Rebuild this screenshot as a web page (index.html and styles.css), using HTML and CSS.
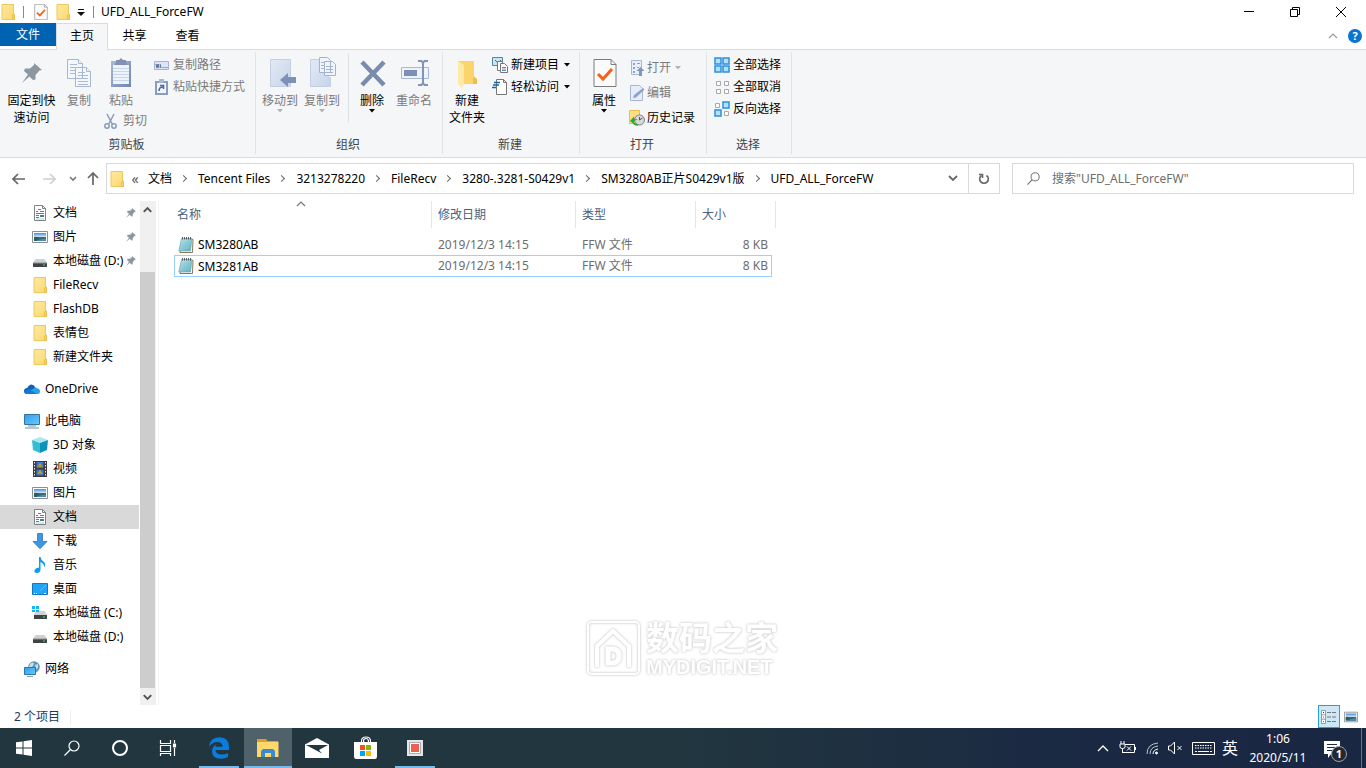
FILE: index.html
```html
<!DOCTYPE html>
<html lang="zh-CN">
<head>
<meta charset="utf-8">
<title>UFD_ALL_ForceFW</title>
<link rel="stylesheet" href="styles.css">
</head>
<body>
<svg class="defs" aria-hidden="true">
  <defs>
    <linearGradient id="gFolder" x1="0" y1="0" x2="1" y2="1"><stop offset="0" stop-color="#ffe9a0"/><stop offset="1" stop-color="#fbd76f"/></linearGradient>
    <linearGradient id="gSky" x1="0" y1="0" x2="0" y2="1"><stop offset="0" stop-color="#3f8fe0"/><stop offset=".5" stop-color="#d8ecf8"/><stop offset=".55" stop-color="#3c6e76"/><stop offset="1" stop-color="#2b5a8c"/></linearGradient>
    <linearGradient id="gScreen" x1="0" y1="0" x2="1" y2="1"><stop offset="0" stop-color="#2e9ff0"/><stop offset="1" stop-color="#6cc8fb"/></linearGradient>
    <linearGradient id="gNote" x1="0" y1="0" x2="1" y2="1"><stop offset="0" stop-color="#c6e9ef"/><stop offset="1" stop-color="#57aebb"/></linearGradient>
    <linearGradient id="gPale" x1="0" y1="0" x2="1" y2="1"><stop offset="0" stop-color="#e3eaf6"/><stop offset="1" stop-color="#c6d4e9"/></linearGradient>
    <linearGradient id="gClip" x1="0" y1="0" x2="1" y2="1"><stop offset="0" stop-color="#a9b8d5"/><stop offset="1" stop-color="#7186b0"/></linearGradient>
  </defs>
  <symbol id="folder" viewBox="0 0 16 16"><path d="M2 .5h11.500V11l1 1v3.500H2z" fill="url(#gFolder)" stroke="#ecc95d"/><path d="M12.500 15.500V11l2-1v5.500z" fill="#f8d468" stroke="#e3b93f" stroke-width=".7"/></symbol>
  <symbol id="doc" viewBox="0 0 16 16"><path d="M2.500.500h8l3 3v12h-11z" fill="#fff" stroke="#7d8286"/><path d="M10.500.500v3h3" fill="none" stroke="#7d8286"/><path d="M4 6.500h2M6 4.500h3M8 6.500h4M4 8.500h8M4 10.500h3M4 12.500h3" stroke="#1c8fdc"/><path d="M8 10h4v2H8z" fill="#3a7fa0"/><path d="M4 14h8" stroke="#9aa" stroke-width=".6"/></symbol>
  <symbol id="picture" viewBox="0 0 16 16"><path d="M.5 2.500h15v11H.500z" fill="#fff" stroke="#8b8f93"/><path d="M2 4h12v8H2z" fill="url(#gSky)"/><path d="M2 8q4-1 6 2l6 1v1H2z" fill="#2e5f5d"/><path d="M7 10.500l7-1V12H4z" fill="#4c89bd"/></symbol>
  <symbol id="drive" viewBox="0 0 16 16"><path d="M3.500 6h9L15 10H1z" fill="#cfd1d3"/><path d="M1 10h14v4H1z" fill="#3f4346"/><path d="M1 10h14" stroke="#8b8f92"/><path d="M11 11.500h2v1h-2z" fill="#35e26a"/></symbol>
  <symbol id="drivec" viewBox="0 0 16 16"><path d="M4.500 6h8L15 10H1.500z" fill="#cfd1d3"/><path d="M2 10h13v4H2z" fill="#3f4346"/><path d="M11 11.500h2v1h-2z" fill="#35e26a"/><path d="M0 1h3v3H0zM4 1h3v3H4zM0 5h3v2H0zM4 5h3v2H4z" fill="#15b5f5"/></symbol>
  <symbol id="cloud" viewBox="0 0 16 16"><path d="M3.500 13Q0 12.800 0 10q0-2.600 3.200-3Q4.300 4 7 3.500q2.700-.2 4.500 3.200l-8 6z" fill="#0d62b9"/><path d="M3.500 13q1-4 5-4.700Q11 5.500 13 7.200q3 .3 3 3.300T13.200 13z" fill="#28a0ea"/><path d="M5 8l8 5H3.500q-3.200 0-3.300-2.500z" fill="#1479d2"/></symbol>
  <symbol id="pc" viewBox="0 0 16 16"><path d="M.5 1.500h15v10H.500z" fill="url(#gScreen)" stroke="#31759f"/><path d="M4 13h8M1 15h14" stroke="#7590a2"/></symbol>
  <symbol id="cube" viewBox="0 0 16 16"><path d="M0 3l8-3 8 3-8 3z" fill="#a8e9f1"/><path d="M0 3l8 3v10l-7-3z" fill="#35bdd2"/><path d="M16 3L8 6v10l7-3z" fill="#0c93bd"/></symbol>
  <symbol id="film" viewBox="0 0 16 16"><path d="M1 0h14v16H1z" fill="#3b3b40"/><path d="M2.500 1v14M13.500 1v14" stroke="#e8e8e8" stroke-dasharray="1.500 1.500"/><path d="M4.500 1h7v6h-7zM4.500 8.500h7v6h-7z" fill="#3b78d4"/><path d="M5 6l3-4 3 4zM5 13l3-4 3 4z" fill="#d59a2c"/><path d="M5 5h6M5 13h5" stroke="#4a9a40"/></symbol>
  <symbol id="down" viewBox="0 0 16 16"><path d="M5.500.500h5v8h4.500L8 15.700 1 8.500h4.500z" fill="#3d96e2" stroke="#2a78bd" stroke-width=".8"/></symbol>
  <symbol id="music" viewBox="0 0 16 16"><path d="M7 0h1.500q.5 3 3 4.500 3 2.500.5 6 .5-4-3.500-5.500v8q-.5 3-3.500 3T2.500 13.500t4.500-3z" fill="#0c9cf0"/></symbol>
  <symbol id="desk" viewBox="0 0 16 16"><path d="M.5 2.500h15v11H.500z" fill="#1ea5fa" stroke="#1279bd"/><path d="M2 12.500h1M4 12.500h1M12 12.500h2" stroke="#fff"/><path d="M8 10l6-6" stroke="#54beff"/></symbol>
  <symbol id="net" viewBox="0 0 16 16"><circle cx="10" cy="6" r="5.800" fill="#5f99ba"/><path d="M6 3q3-3 4 0l-2 3H5zM11 4l3-1v4l-2 1z" fill="#c3dfeb"/><path d="M.5 6.500h11v7H.500z" fill="url(#gScreen)" stroke="#2779ad"/><path d="M3 15.500h6" stroke="#8ba5b3"/></symbol>
  <symbol id="pin" viewBox="0 0 20 20"><path d="M12 0l8 7-2.500.5-4 4.500v4.500l-2.500.5-3.500-3.500L0 20l6-8.500L2 8l1-2.500h5l4-3.500z" fill="#8c98a1"/></symbol>
  <symbol id="notepad" viewBox="0 0 16 16"><path d="M4 2.500h11l-.5 13H2z" fill="#fff" stroke="#8a745a"/><path d="M3.500 1.500h10.500l-1.500 12.500H.800z" fill="url(#gNote)" stroke="#6fa9b5" stroke-width=".7"/><path d="M4 5h8.500M3.700 7h8.500M3.400 9h8.500M3.100 11h8.500" stroke="#86c8d3" stroke-width=".6"/><path d="M4.500 0v2.500M6.500 0v2.500M8.500 0v2.500M10.500 0v2.500M12.500 0v2.500" stroke="#46515a" stroke-width=".9"/></symbol>
  <symbol id="check" viewBox="0 0 24 28"><path d="M1 .500h17l5 5v22H1z" fill="#fbfbfb" stroke="#7c7c7c"/><path d="M18 .500v5h5" fill="none" stroke="#7c7c7c"/><path d="M5 15l5 5 9-10" fill="none" stroke="#f4601a" stroke-width="3"/></symbol>
  <symbol id="lens" viewBox="0 0 16 16"><circle cx="10" cy="6" r="5" fill="none" stroke="currentColor" stroke-width="1.200"/><path d="M6.500 9.500L.500 15.500" stroke="currentColor" stroke-width="1.300"/></symbol>
  <symbol id="caret" viewBox="0 0 6 4"><path d="M0 0h6L3 3.500z" fill="currentColor"/></symbol>
</svg>

<header class="titlebar">
  <div class="quick">
    <svg class="i16"><use href="#folder"/></svg>
    <span class="bar"></span>
    <button class="plain" aria-label="属性"><svg class="i16"><use href="#check"/></svg></button>
    <button class="plain" aria-label="新建文件夹"><svg class="i16"><use href="#folder"/></svg></button>
    <button class="plain more" aria-label="自定义快速访问工具栏"><svg width="8" height="8" viewBox="0 0 8 8"><path d="M1 1.500h6" stroke="#111"/><path d="M0 4h8L4 8z" fill="#111"/></svg></button>
    <span class="bar"></span>
  </div>
  <h1 class="title">UFD_ALL_ForceFW</h1>
  <div class="winbtns">
    <button class="plain" aria-label="最小化"><svg width="10" height="10"><path d="M0 4.500h10" stroke="#000"/></svg></button>
    <button class="plain" aria-label="还原"><svg width="10" height="10" fill="none" stroke="#000"><path d="M.5 2.500h7v7h-7zM2.500 2V.500h7v7H8"/></svg></button>
    <button class="plain" aria-label="关闭"><svg width="10" height="10"><path d="M0 0l10 10M10 0L0 10" stroke="#000"/></svg></button>
  </div>
</header>

<nav class="tabs">
  <button class="tab file">文件</button>
  <button class="tab active">主页</button>
  <button class="tab">共享</button>
  <button class="tab">查看</button>
  <div class="tabs-end">
    <button class="plain" aria-label="折叠功能区"><svg width="10" height="6"><path d="M1 5l4-4 4 4" fill="none" stroke="#999" stroke-width="1.200"/></svg></button>
    <button class="help" aria-label="帮助">?</button>
  </div>
</nav>

<section class="ribbon">
  <div class="group clipboard">
    <div class="tools">
      <button class="big pinbtn"><svg class="ico" viewBox="0 0 32 32"><use href="#pin" x="6" y="6" width="20" height="20"/></svg>固定到快<br>速访问</button>
      <button class="big copybtn off"><svg class="ico" viewBox="0 0 32 32"><g fill="#f4f7fc" stroke="#a8b7d1"><path d="M4.500 2.500h11l4 4v15h-15zM12.500 10.500h11l4 4v15h-15z"/><path d="M15.500 2.500v4h4M23.500 10.500v4h4"/></g><path d="M7 7.500h7M7 10.500h5M7 13.500h5M7 16.500h5M15 15.500h7M15 18.500h10M15 21.500h10M15 24.500h10M15 27.500h10" stroke="#a9bad7"/></svg>复制</button>
      <div class="paste">
        <button class="big off"><svg class="ico" viewBox="0 0 32 32"><path d="M6 4h20v26H6z" fill="url(#gClip)"/><path d="M8 8h16v19H8z" fill="#edf3fb"/><path d="M11 5V3h3l2-2 2 2h3v2l1 3H10z" fill="#8291b1"/><path d="M8 11.500h16M8 14.500h16M8 17.500h16M8 20.500h16M8 23.500h16" stroke="#c9d6ea"/></svg>粘贴</button>
        <button class="small off"><svg class="i16" fill="none" stroke="#899bbd"><circle cx="4" cy="13" r="2.200" stroke-width="1.500"/><circle cx="11" cy="13" r="2.200" stroke-width="1.500"/><path d="M4 1l5.500 10.500M11 1L5.500 11.500" stroke-width="1.500"/></svg>剪切</button>
      </div>
      <div class="list">
        <button class="small off"><svg class="i16"><path d="M.5 4.500h14v8H.500z" fill="#dbe5f5" stroke="#a5b4d0"/><path d="M2 7l1 4 1-4 1 4M6 7l1 4" fill="none" stroke="#58698e"/><path d="M8.500 10.500h5" stroke="#58698e" stroke-dasharray="1 1"/></svg>复制路径</button>
        <button class="small off"><svg class="i16"><path d="M1 2h13v14H1z" fill="#899dc3"/><path d="M3 4h9v10H3z" fill="#f1f5fb"/><path d="M5 0h5v4H5z" fill="#a9b8d2"/><path d="M5 12q0-4 4-4M6 6.500h3.500V10" fill="none" stroke="#536b98" stroke-width="1.600"/></svg>粘贴快捷方式</button>
      </div>
    </div>
    <div class="caption">剪贴板</div>
  </div>

  <div class="group organize">
    <div class="tools">
      <button class="big off"><svg class="ico" viewBox="0 0 32 32"><path d="M6.500 2.500h20v27h-20z" fill="url(#gPale)" stroke="#c3cfe4"/><path d="M16 23l8-7v4h8v6h-8v4z" fill="#7d90b5"/></svg>移动到<svg class="caret"><use href="#caret"/></svg></button>
      <button class="big off"><svg class="ico" viewBox="0 0 32 32"><path d="M4.500 2.500h18v18h2v9h-20z" fill="url(#gPale)" stroke="#c3cfe4"/><path d="M13.500.500h8l3 3v12h-11zM18.500 4.500h8l3 3v11h-11z" fill="#f0f4fb" stroke="#a3b2cf"/><path d="M15 5.500h3M15 8.500h3M15 11.500h3M20 9.500h7M20 12.500h7M20 15.500h7" stroke="#a3b2cf"/></svg>复制到<svg class="caret"><use href="#caret"/></svg></button>
      <span class="divider"></span>
      <button class="big"><svg class="ico" viewBox="0 0 32 32"><path d="M6 5l22 23M28 5L6 28" stroke="#7a8cad" stroke-width="4.500"/></svg>删除<svg class="caret"><use href="#caret"/></svg></button>
      <button class="big off"><svg class="ico" viewBox="0 0 32 32"><path d="M3.500 10.500h27v11h-27z" fill="#edf3fb" stroke="#a9b8d4"/><path d="M6 13h13v6H6z" fill="#7c8fb5"/><path d="M20 4h3.500l1.500 2 1.500-2H30M20 28h3.500l1.500-2 1.500 2H30M25 6v20" fill="none" stroke="#8193b6" stroke-width="2"/></svg>重命名</button>
    </div>
    <div class="caption">组织</div>
  </div>

  <div class="group new">
    <div class="tools">
      <button class="big"><svg class="ico" viewBox="0 0 32 32"><path d="M7 4h16v15l3 3v5H7z" fill="#fbd46b"/><path d="M7 4l6 4v19l-2 4-4-4z" fill="#ffe9a8"/><path d="M22 27V20l4 2v5z" fill="#efbd4b"/></svg>新建<br>文件夹</button>
      <div class="list">
        <button class="small"><svg class="i16"><path d="M.5.500h10v8H.500z" fill="#c8e5f2" stroke="#57879c"/><path d="M3 3l3 3 3-3" fill="none" stroke="#39738d"/><path d="M5.500 4.500h5v9h-5z" fill="#fff" stroke="#777"/><path d="M8.500 6.500h4l3 3v6h-7z" fill="#fff" stroke="#777"/><path d="M10 10.500h4M10 13.500h4" stroke="#4e91d4"/><path d="M10 12h4" stroke="#df7580"/></svg>新建项目<svg class="caret"><use href="#caret"/></svg></button>
        <button class="small"><svg class="i16"><path d="M4.500.500h7l3 3v12h-10z" fill="#fff" stroke="#777"/><path d="M11.500.500v3h3" fill="none" stroke="#777"/><path d="M2 3.500h6M1 6h6M0 8.500h4" stroke="#1766a8" stroke-width="1.400"/></svg>轻松访问<svg class="caret"><use href="#caret"/></svg></button>
      </div>
    </div>
    <div class="caption">新建</div>
  </div>

  <div class="group open">
    <div class="tools">
      <button class="big"><svg class="ico" viewBox="0 0 32 32"><use href="#check" x="5" y="2" width="24" height="28"/></svg>属性<svg class="caret"><use href="#caret"/></svg></button>
      <div class="list tall">
        <button class="small off"><svg class="i16"><path d="M2.500.500h10v14h-10z" fill="#eaf0fa" stroke="#a6b6d3"/><path d="M4 3h2v2H4zM4 7h2v2H4zM4 11h2v2H4zM8 3h3v1H8zM8 7h2v1H8z" fill="#8fa2c7"/><path d="M11.500 7l4 4h-2.500v5h-3v-5H7.500z" fill="#8195bc"/></svg>打开<svg class="caret"><use href="#caret"/></svg></button>
        <button class="small off"><svg class="i16"><path d="M1.500.500h9l3 3v12h-12z" fill="#e6edf8" stroke="#a6b6d3"/><path d="M4 13l1-3 9-7 1.500 1.500-8.500 8z" fill="#8fa3c7"/></svg>编辑</button>
        <button class="small"><svg class="i16"><path d="M.5.500h10v13H.500z" fill="#ffdf7e" stroke="#e9bd4e"/><circle cx="10.500" cy="10" r="5" fill="#d7d9da" stroke="#7b7f82"/><path d="M10.500 7v3l3-2" fill="none" stroke="#555"/><path d="M1 11l4-4.500V9q3 0 4 1-3 0-4 1v3z" fill="#24ad32"/><path d="M4 12q1 3 5 3" fill="none" stroke="#24ad32" stroke-width="1.500"/></svg>历史记录</button>
      </div>
    </div>
    <div class="caption">打开</div>
  </div>

  <div class="group select">
    <div class="tools">
      <div class="list">
        <button class="small"><svg class="i16"><path d="M1 1h6v6H1zM9 1h6v6H9zM1 9h6v6H1zM9 9h6v6H9z" fill="#b4e0fb" stroke="#2b90df" stroke-width="1.500"/></svg>全部选择</button>
        <button class="small"><svg class="i16"><path d="M2.500 2.500h4v4h-4zM10.500 2.500h4v4h-4zM2.500 10.500h4v4h-4zM10.500 10.500h4v4h-4z" fill="#fff" stroke="#a9a9a9"/></svg>全部取消</button>
        <button class="small"><svg class="i16"><path d="M1.500 2.500h4v4h-4zM10.500 10.500h4v4h-4z" fill="#fff" stroke="#a9a9a9"/><path d="M9 1h6v6H9zM1 9h6v6H1z" fill="#b4e0fb" stroke="#2b90df" stroke-width="1.500"/></svg>反向选择</button>
      </div>
    </div>
    <div class="caption">选择</div>
  </div>
</section>

<section class="navbar">
  <div class="arrows">
    <button class="plain" aria-label="后退"><svg width="14" height="12" fill="none" stroke="#666" stroke-width="1.700"><path d="M1 6h12M6 1L1 6l5 5"/></svg></button>
    <button class="plain" aria-label="前进"><svg width="14" height="12" fill="none" stroke="#d0d0d0" stroke-width="1.700"><path d="M1 6h12M8 1l5 5-5 5"/></svg></button>
    <button class="plain recent" aria-label="最近浏览的位置"><svg width="8" height="6" fill="none" stroke="#777" stroke-width="1.600"><path d="M1 1l3 3 3-3"/></svg></button>
    <button class="plain up" aria-label="上移"><svg width="12" height="14" fill="none" stroke="#666" stroke-width="1.700"><path d="M6 13V1M1 6l5-5 5 5"/></svg></button>
  </div>
  <div class="address">
    <svg class="i16"><use href="#folder"/></svg>
    <span class="laquo">«</span>
    <ol class="crumbs">
      <li>文档</li><li>Tencent Files</li><li>3213278220</li><li>FileRecv</li><li>3280-.3281-S0429v1</li><li>SM3280AB正片S0429v1版</li><li>UFD_ALL_ForceFW</li>
    </ol>
    <button class="plain drop" aria-label="以前的位置"><svg width="10" height="7" fill="none" stroke="#666" stroke-width="1.800"><path d="M1 1l4 4 4-4"/></svg></button>
    <button class="plain refresh" aria-label="刷新"><svg width="12" height="12" fill="none" stroke="#666" stroke-width="1.600"><path d="M8.500 2.500a4.300 4.300 0 1 1-5 0"/><path d="M1 1.500h3.500V5" /></svg></button>
  </div>
  <label class="search"><svg class="lens"><use href="#lens"/></svg><input type="text" placeholder='搜索"UFD_ALL_ForceFW"' aria-label="搜索"></label>
</section>

<main class="main">
  <aside class="tree">
    <ul>
      <li><svg class="i16"><use href="#doc"/></svg><span>文档</span><svg class="pinned"><use href="#pin"/></svg></li>
      <li><svg class="i16"><use href="#picture"/></svg><span>图片</span><svg class="pinned"><use href="#pin"/></svg></li>
      <li><svg class="i16"><use href="#drive"/></svg><span>本地磁盘 (D:)</span><svg class="pinned"><use href="#pin"/></svg></li>
      <li><svg class="i16"><use href="#folder"/></svg><span>FileRecv</span></li>
      <li><svg class="i16"><use href="#folder"/></svg><span>FlashDB</span></li>
      <li><svg class="i16"><use href="#folder"/></svg><span>表情包</span></li>
      <li><svg class="i16"><use href="#folder"/></svg><span>新建文件夹</span></li>
      <li class="root"><svg class="i16"><use href="#cloud"/></svg><span>OneDrive</span></li>
      <li class="root"><svg class="i16"><use href="#pc"/></svg><span>此电脑</span></li>
      <li><svg class="i16"><use href="#cube"/></svg><span>3D 对象</span></li>
      <li><svg class="i16"><use href="#film"/></svg><span>视频</span></li>
      <li><svg class="i16"><use href="#picture"/></svg><span>图片</span></li>
      <li class="current"><svg class="i16"><use href="#doc"/></svg><span>文档</span></li>
      <li><svg class="i16"><use href="#down"/></svg><span>下载</span></li>
      <li><svg class="i16"><use href="#music"/></svg><span>音乐</span></li>
      <li><svg class="i16"><use href="#desk"/></svg><span>桌面</span></li>
      <li><svg class="i16"><use href="#drivec"/></svg><span>本地磁盘 (C:)</span></li>
      <li><svg class="i16"><use href="#drive"/></svg><span>本地磁盘 (D:)</span></li>
      <li class="root"><svg class="i16"><use href="#net"/></svg><span>网络</span></li>
    </ul>
  </aside>
  <div class="scroll" aria-hidden="true">
    <svg class="sarrow" viewBox="0 0 16 17"><path d="M4 11l4-4 4 4" fill="none" stroke="#505050" stroke-width="2"/></svg>
    <span class="before"></span><span class="thumb"></span>
    <svg class="sarrow" viewBox="0 0 16 17"><path d="M4 7l4 4 4-4" fill="none" stroke="#505050" stroke-width="2"/></svg>
  </div>
  <div class="content">
    <table class="files">
      <thead><tr><th><svg class="sort" viewBox="0 0 10 6"><path d="M1 5l4-4 4 4" fill="none" stroke="#777" stroke-width="1.200"/></svg>名称</th><th>修改日期</th><th>类型</th><th>大小</th></tr></thead>
      <tbody>
        <tr><td class="name"><svg class="i16"><use href="#notepad"/></svg>SM3280AB</td><td>2019/12/3 14:15</td><td>FFW 文件</td><td class="size">8 KB</td></tr>
        <tr class="focus"><td class="name"><svg class="i16"><use href="#notepad"/></svg>SM3281AB</td><td>2019/12/3 14:15</td><td>FFW 文件</td><td class="size">8 KB</td></tr>
      </tbody>
    </table>
    <div class="watermark">
      <svg width="56" height="58" viewBox="0 0 56 58" fill="none" stroke="#fff"><rect x="2" y="3" width="51" height="52" rx="4" stroke-width="2"/><path d="M11 48V27l16-15 16 15v21" stroke-width="4"/><path d="M22 30h4q7 0 7 7t-7 7h-4z" stroke-width="5"/></svg>
      <div class="wm-text"><div class="wm-cn">数码之家</div><div class="wm-en">MYDIGIT.NET</div></div>
    </div>
  </div>
</main>

<footer class="status">
  <span class="count">2 个项目</span>
  <div class="views">
    <button class="view on" aria-label="详细信息"><svg width="16" height="14"><path d="M.5.500h4v13h-4zM.5 4.800h4M.5 9.200h4" fill="#fff" stroke="#999"/><path d="M6 2.500h10M6 7h10M6 11.500h10" stroke="#777" stroke-dasharray="4 1"/><path d="M2 2h1v1H2z" fill="#333"/><path d="M2 6.500h1v1H2z" fill="#1684df"/><path d="M2 11h1v1H2z" fill="#d33"/></svg></button>
    <button class="view" aria-label="大图标"><svg class="i14"><use href="#picture"/></svg></button>
  </div>
</footer>

<footer class="taskbar">
  <button class="task" aria-label="开始"><svg width="16" height="16" viewBox="0 0 16 16"><path d="M0 2.300L6.500 1.400V7.500H0zM7.500 1.200L16 0v7.500H7.500zM0 8.500h6.500v6.100L0 13.700zM7.500 8.500H16V16l-8.500-1.200z" fill="#fff"/></svg></button>
  <button class="task" aria-label="搜索"><svg class="i16"><use href="#lens"/></svg></button>
  <button class="task" aria-label="Cortana"><svg width="18" height="18"><circle cx="9" cy="9" r="7" fill="none" stroke="#fff" stroke-width="2"/></svg></button>
  <button class="task" aria-label="任务视图"><svg width="18" height="16" fill="none" stroke="#fff" stroke-width="1.200"><path d="M1.500 0v3.500h10V0M1.500 5.500h10v6h-10zM1.500 16v-2.500h10V16M15.500 0v3M15.500 8v8"/><path d="M14.500 4h2v3h-2z" fill="#fff"/></svg></button>
  <div class="apps">
    <button class="task run" aria-label="Edge"><svg width="22" height="22" viewBox="0 0 22 22"><path d="M1 10Q2 .500 11.500.300 21 .500 21 10v3H7.500q.3 4.500 6.500 4.500 3.500 0 6-1.500v4q-3 1.700-7 1.700Q4 21.500 4 14.500q0-5 4.500-7.500Q7.300 8.500 7.300 9.700h7.200q0-4.700-5-4.700Q4 5 1 10z" fill="#0b7bdc"/></svg></button>
    <button class="task cur" aria-label="文件资源管理器"><svg width="22" height="18" viewBox="0 0 22 18"><path d="M0 0h9l1.500 2H21v3H0z" fill="#e0a021"/><path d="M0 3h21.500v15H0z" fill="#ffd76b"/><path d="M4 18v-6l2-2h10l2 2v6h-4v-4H8v4z" fill="#3a8ad0"/></svg></button>
    <button class="task" aria-label="邮件"><svg width="24" height="20" viewBox="0 0 24 20"><path d="M0 6.500L12 0l12 6.500V20H0z" fill="#fff"/><path d="M1 7h22l-9 5 3 3.500z" fill="#21363f"/></svg></button>
    <button class="task" aria-label="应用商店"><svg width="24" height="24" viewBox="0 0 24 24"><path d="M7.500 7V5q0-4 4.500-4t4.500 4v2M9.500 7V5.500q0-3 2.500-3t2.500 3V7" fill="none" stroke="#fff" stroke-width="1.200"/><path d="M0 6h23v14q0 3-2 3H2q-2 0-2-3z" fill="#fff"/><path d="M6 9h5v5H6z" fill="#f25022"/><path d="M12 9h5v5h-5z" fill="#7fba00"/><path d="M6 15h5v5H6z" fill="#00a4ef"/><path d="M12 15h5v5h-5z" fill="#ffb900"/></svg></button>
    <button class="task run" aria-label="量产工具"><svg width="16" height="16"><path d="M0 0h16v16H0z" fill="#e1e6e9"/><path d="M2.500 2.500h11v11h-11z" fill="#fff" stroke="#a7adb2"/><path d="M4 4h8v8H4z" fill="#ee5f50"/></svg></button>
  </div>
  <div class="tray">
    <svg class="expand" width="12" height="8"><path d="M1 7l5-5 5 5" fill="none" stroke="#fff" stroke-width="1.400"/></svg>
    <svg width="17" height="14" fill="none" stroke="#fff"><path d="M6 3.500h9.500v8H4M16.500 6v3M1 3h5v3q0 1.500-2.500 1.500T1 6zM2 0v3M5 0v3M3.500 8v4M8 5.500l4 4M12 5.500l-4 4"/></svg>
    <svg width="14" height="14" fill="none" stroke="#fff"><path d="M8 13q0-4 5-5"/><path d="M5 13q0-7 8-8M2 13Q2 3 13 2" stroke="#bbc5cb"/><circle cx="11.500" cy="12" r="1" fill="#fff"/></svg>
    <svg width="15" height="14" fill="none" stroke="#fff"><path d="M.5 5h2l4-4v12l-4-4h-2zM9.500 5l4 4M13.500 5l-4 4"/></svg>
    <svg width="23" height="13" fill="none" stroke="#fff"><path d="M.5.500h22v12H.500z"/><path d="M3 3.500h17M3 6h17" stroke-dasharray="1.500 1"/><path d="M3 9.500h2M6 9.500h11M18 9.500h2"/></svg>
    <span class="ime">英</span>
    <div class="clock"><time>1:06</time><span>2020/5/11</span></div>
    <button class="notice" aria-label="通知"><svg width="16" height="17"><path d="M0 0h16v13H7l-3 4v-4H0z" fill="#fff"/><path d="M3 3.500h10M3 6.500h10M3 9.500h7" stroke="#1c2a44"/></svg><span class="badge">1</span></button>
    <span class="peek"></span>
  </div>
</footer>
</body>
</html>
```

FILE: styles.css
```css
* { box-sizing: border-box; }
body {
  margin: 0;
  height: 100vh;
  display: flex;
  flex-direction: column;
  overflow: hidden;
  background: #fff;
  color: #000;
  font: 12px/18px "Noto Sans", "Noto Sans CJK SC", sans-serif;
}
button, input { font: inherit; color: inherit; }
button { border: 0; padding: 0; background: none; }
ul, ol { list-style: none; margin: 0; padding: 0; }
svg { display: block; flex: none; }
.defs { position: absolute; width: 0; height: 0; }
.i16 { width: 16px; height: 16px; }
.i14 { width: 14px; height: 14px; }
.plain { display: flex; align-items: center; justify-content: center; }

.titlebar { display: flex; align-items: center; height: 23px; flex: none; }
.quick { display: flex; align-items: center; }
.bar { width: 1px; height: 12px; background: #888; margin: 0 9px 0 7px; }
.quick .plain { margin-right: 6px; }
.quick .more { margin: 0; width: 8px; height: 16px; }
.title { margin: 0; font-size: 12px; font-weight: 400; flex: 1; }
.quick .bar:last-child { margin: 0 7px 0 8px; }
.winbtns { display: flex; padding-right: 2px; }
.winbtns .plain { width: 46px; height: 22px; }

.tabs { display: flex; height: 27px; flex: none; border-bottom: 1px solid #dadbdc; }
.tab { width: 53px; height: 25px; }
.file { width: 56px; height: 23px; background: #0063b1; color: #fff; }
.active { width: 52px; height: 27px; background: #f5f6f7; border: 1px solid #dadbdc; border-width: 1px 1px 0; padding-bottom: 2px; }
.tabs-end { margin-left: auto; display: flex; align-items: center; gap: 10px; padding-right: 4px; }
.help { width: 14px; height: 14px; border-radius: 50%; background: #0a74d0; color: #fff; font-size: 11px; line-height: 14px; font-weight: 700; }

.ribbon { display: flex; flex: none; background: #f5f6f7; border-bottom: 1px solid #dadbdc; padding: 2px 0 3px; }
.group { display: flex; flex-direction: column; border-right: 1px solid #e1e3e5; }
.tools { display: flex; height: 84px; }
.caption { text-align: center; color: #444; line-height: 18px; }
.clipboard { width: 256px; }
.organize { width: 187px; padding-left: 3px; }
.new { width: 137px; padding-left: 3px; }
.open { width: 127px; padding-left: 3px; }
.select { width: 85px; padding-left: 7px; }
.caption { margin-right: 2px; }
.organize .caption, .new .caption, .open .caption { margin-right: 5px; }
.select .caption { margin-right: 9px; }
.big { width: 42px; padding-top: 5px; display: flex; flex-direction: column; align-items: center; align-self: flex-start; line-height: 17px; white-space: nowrap; }
.ico { width: 32px; height: 32px; margin-bottom: 3px; }
.pinbtn { width: 63px; }
.pinbtn, .new .big { display: block; text-align: center; }
.pinbtn .ico, .new .big .ico { margin: 0 auto 3px; }
.copybtn { width: 32px; }
.off { color: #7b7b7b; }
.caret { width: 6px; height: 4px; }
.off .caret { color: #b3b3b3; }
.paste { width: 55px; padding-left: 8px; margin-right: 4px; }
.paste .big { width: 36px; }
.paste .small { margin-top: 1px; gap: 4px; }
.small { display: flex; align-items: center; gap: 3px; height: 22px; white-space: nowrap; }
.small .caret { margin-left: 2px; }
.list { padding-top: 2px; }
.new .list { padding-left: 4px; }
.tall { padding: 3px 0 0 4px; }
.tall .small { height: 25px; gap: 2px; }
.divider { width: 1px; height: 68px; background: #dcdfe3; margin: 2px 2px 0 5px; }

.navbar { display: flex; align-items: center; height: 43px; flex: none; padding: 0 12px 2px; }
.arrows { display: flex; align-items: center; width: 94px; gap: 16px; }
.recent { margin-left: -3px; }
.up { margin-left: -6px; }
.address { flex: 1; display: flex; align-items: center; height: 31px; border: 1px solid #d9d9d9; padding-left: 2px; margin-right: 12px; }
.laquo { width: 20px; margin-right: 3px; text-align: center; font-size: 14px; color: #555; }
.crumbs { display: flex; flex: 1; white-space: nowrap; }
.crumbs li { display: flex; align-items: center; }
.crumbs li + li::before { content: ""; width: 4px; height: 4px; border: solid #666; border-width: 1px 1px 0 0; transform: rotate(45deg); margin: 0 12px 0 9px; }
.drop { width: 30px; height: 29px; }
.refresh { width: 31px; height: 29px; border-left: 1px solid #d9d9d9; }
.search { width: 342px; height: 31px; display: flex; align-items: center; border: 1px solid #d9d9d9; padding: 0 14px; color: #6d6d6d; gap: 12px; }
.lens { width: 13px; height: 13px; }
.search input { flex: 1; min-width: 0; border: 0; outline: 0; padding: 0; background: none; }
.search input::placeholder { color: #6d6d6d; opacity: 1; }

.main { flex: 1; min-height: 0; display: flex; }
.tree { width: 140px; overflow: hidden; }
.tree li { height: 24px; display: flex; align-items: center; padding: 0 3px 0 32px; margin-right: 1px; gap: 5px; white-space: nowrap; }
.tree span { flex: 1; min-width: 0; overflow: hidden; }
.tree .root { padding-left: 24px; margin-top: 8px; }
.tree .current { background: #d9d9d9; }
.pinned { width: 10px; height: 10px; margin-left: -4px; }
.scroll { width: 16px; display: flex; flex-direction: column; background: #f0f0f0; }
.sarrow { width: 15px; height: 17px; }
.before { flex: 54; }
.thumb { flex: 416; margin-right: 1px; background: #cdcdcd; }
.content { flex: 1; position: relative; border-left: 1px solid #f3f3f3; margin-left: 2px; padding-left: 12px; }
.files { display: block; border-collapse: collapse; }
.files thead, .files tbody { display: block; }
.files tr { display: grid; grid-template-columns: 261px 144px 120px 80px; width: 605px; }
.files th { position: relative; text-align: left; font-weight: 400; color: #4c607a; border-right: 1px solid #e5e5e5; padding: 0 6px; line-height: 27px; }
.files tbody { padding: 6px 0 0 3px; }
.files tbody tr { width: 598px; height: 21px; grid-template-columns: 258px 144px 120px 76px; }
.files td { padding: 0 6px; line-height: 21px; color: #6d6d6d; }
.files .name { display: flex; align-items: center; gap: 4px; padding-left: 4px; color: #000; }
.files .size { text-align: right; padding-right: 4px; }
.files .focus { height: 22px; box-shadow: inset 0 0 0 1px #99d1ff; }
.sort { position: absolute; left: 125px; top: 0; width: 10px; height: 6px; }
.watermark { position: absolute; left: 427px; bottom: 28px; display: flex; align-items: center; gap: 4px; color: #fff; filter: drop-shadow(0 0 1px #cfcfcf) drop-shadow(0 0 1px #e4e4e4); }
.wm-text { display: flex; flex-direction: column; gap: 4px; }
.wm-cn { font: 700 33px/34px "Noto Sans CJK SC", sans-serif; }
.wm-en { font: 700 20px/20px "Liberation Sans", sans-serif; }

.status { height: 23px; flex: none; display: flex; align-items: center; padding: 0 4px 0 14px; color: #1e395b; }
.count { padding-right: 10px; border-right: 1px solid #eee; line-height: 14px; }
.views { margin-left: auto; display: flex; }
.view { width: 22px; height: 23px; display: flex; align-items: center; justify-content: center; }
.on { background: #cce8f6; border: 1px solid #26a0da; }

.taskbar { height: 40px; flex: none; display: flex; color: #fff; background: linear-gradient(90deg, #21363f, #21363f 50%, #1a2843 80%, #1a2742); }
.task { width: 48px; height: 40px; display: flex; align-items: center; justify-content: center; }
.apps { display: flex; gap: 1px; margin-left: 3px; }
.run { background: linear-gradient(#76b9ed, #76b9ed) center bottom / 40px 2px no-repeat; }
.cur { background: #506269; border-bottom: 2px solid #76b9ed; padding-top: 2px; }
.tray { margin-left: auto; display: flex; align-items: center; gap: 9px; }
.expand { margin-right: 1px; }
.ime { font-size: 16px; line-height: 20px; margin-left: -2px; }
.clock { width: 62px; text-align: center; display: flex; flex-direction: column; line-height: 19px; }
.notice { position: relative; width: 28px; height: 24px; padding: 3px 0 0 7px; margin: 0 7px 0 -1px; }
.badge { position: absolute; left: 14px; top: 10px; width: 16px; height: 16px; border: 1px solid #9aa3ae; border-radius: 50%; background: #23282f; font-size: 11px; line-height: 14px; font-weight: 700; text-align: center; }
.peek { width: 5px; height: 40px; border-left: 1px solid #67718a; }
```
